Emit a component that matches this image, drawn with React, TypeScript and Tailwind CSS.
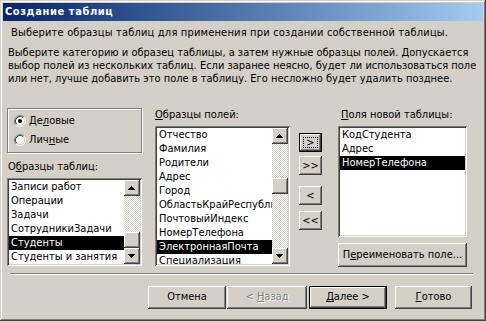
import React from "react";

const F = "font-['DejaVu_Sans_Condensed','DejaVu_Sans',sans-serif]";
const RAISED =
  "shadow-[inset_-1px_-1px_0_#404040,inset_1px_1px_0_#ffffff,inset_-2px_-2px_0_#808080,inset_2px_2px_0_#d4d0c8]";
const SUNKEN =
  "shadow-[inset_1px_1px_0_#808080,inset_-1px_-1px_0_#ffffff,inset_2px_2px_0_#404040,inset_-2px_-2px_0_#d4d0c8]";

function Radio({ checked }: { checked: boolean }) {
  return (
    <svg width="12" height="12" viewBox="0 0 12 12" className="shrink-0">
      <circle cx="6" cy="6" r="4" fill="#ffffff" />
      <path d="M2.11 9.89 A5.5 5.5 0 0 1 9.89 2.11" fill="none" stroke="#808080" />
      <path d="M9.89 2.11 A5.5 5.5 0 0 1 2.11 9.89" fill="none" stroke="#ffffff" />
      <path d="M2.82 9.18 A4.5 4.5 0 0 1 9.18 2.82" fill="none" stroke="#404040" />
      <path d="M9.18 2.82 A4.5 4.5 0 0 1 2.82 9.18" fill="none" stroke="#d4d0c8" />
      {checked && <circle cx="6" cy="6" r="2" fill="#000000" />}
    </svg>
  );
}

function Arrow({ dir }: { dir: "up" | "down" }) {
  return (
    <div className={`w-[16px] h-[16px] bg-[#d4d0c8] ${RAISED} flex items-center justify-center`}>
      <svg width="16" height="16" viewBox="0 0 16 16">
        {dir === "up" ? (
          <g fill="#000">
            <rect x="7" y="6" width="1" height="1" />
            <rect x="6" y="7" width="3" height="1" />
            <rect x="5" y="8" width="5" height="1" />
            <rect x="4" y="9" width="7" height="1" />
          </g>
        ) : (
          <g fill="#000">
            <rect x="4" y="6" width="7" height="1" />
            <rect x="5" y="7" width="5" height="1" />
            <rect x="6" y="8" width="3" height="1" />
            <rect x="7" y="9" width="1" height="1" />
          </g>
        )}
      </svg>
    </div>
  );
}

const CHECK =
  "bg-[image:repeating-conic-gradient(#ffffff_0_25%,#d4d0c8_0_50%)] bg-[length:2px_2px]";

function ScrollBar({ before, after }: { before: number; after: number }) {
  return (
    <div className="w-[16px] h-full flex flex-col shrink-0">
      <Arrow dir="up" />
      <div className={`${CHECK}`} style={{ height: before }} />
      <div className={`w-[16px] h-[16px] bg-[#d4d0c8] ${RAISED}`} />
      <div className={`${CHECK}`} style={{ height: after }} />
      <Arrow dir="down" />
    </div>
  );
}

function ListBox({
  items,
  selected,
  className,
  scroll,
}: {
  items: string[];
  selected: number;
  className: string;
  scroll?: { before: number; after: number };
}) {
  return (
    <div className={`bg-white ${SUNKEN} p-[2px] ${className}`}>
      <div className="flex h-full overflow-hidden">
        <div className="flex-1 min-w-0 overflow-hidden">
          {items.map((t, i) => (
            <div
              key={i}
              className={`h-[14px] leading-[14px] pl-[2px] whitespace-nowrap overflow-hidden ${
                i === selected ? "bg-black text-white" : ""
              }`}
            >
              {t}
            </div>
          ))}
        </div>
        {scroll && <ScrollBar before={scroll.before} after={scroll.after} />}
      </div>
    </div>
  );
}

function SmallBtn({ label, focused }: { label: string; focused?: boolean }) {
  if (focused) {
    return (
      <div className="w-[23px] h-[19px] border border-black">
        <div className={`w-full h-full bg-[#d4d0c8] ${RAISED} p-[3px]`}>
          <div className="w-full h-full border border-dotted border-black flex items-center justify-center leading-none">
            {label}
          </div>
        </div>
      </div>
    );
  }
  return (
    <div className={`w-[23px] h-[19px] bg-[#d4d0c8] ${RAISED} flex items-center justify-center leading-none`}>
      {label}
    </div>
  );
}

function Btn({
  children,
  w,
  def,
  className = "",
}: {
  children: React.ReactNode;
  w: string;
  def?: boolean;
  className?: string;
}) {
  if (def) {
    return (
      <div className={`${w} h-[23px] border border-black ${className}`}>
        <div className={`w-full h-full bg-[#d4d0c8] ${RAISED} flex items-center justify-center`}>
          {children}
        </div>
      </div>
    );
  }
  return (
    <div className={`${w} h-[23px] bg-[#d4d0c8] ${RAISED} flex items-center justify-center ${className}`}>
      {children}
    </div>
  );
}

export default function App() {
  return (
    <div
      className={`w-[486px] h-[321px] bg-[#d4d0c8] p-[3px] ${F} text-[11px] text-black shadow-[inset_-1px_-1px_0_#404040,inset_1px_1px_0_#d4d0c8,inset_-2px_-2px_0_#808080,inset_2px_2px_0_#ffffff] flex flex-col overflow-hidden`}
    >
      <div className="h-[18px] shrink-0 bg-linear-to-r from-[#0a246a] to-[#a6caf0] flex items-center pl-[2px] text-white font-bold text-[11px] tracking-[0.6px] leading-[18px]">
        Создание таблиц
      </div>

      <div className="pl-[8px] pt-[5px] leading-[13px] whitespace-nowrap tracking-[0.18px]">
        Выберите образцы таблиц для применения при создании собственной таблицы.
      </div>
      <div className="pl-[5px] mt-[7px] leading-[13px] whitespace-nowrap">
        Выберите категорию и образец таблицы, а затем нужные образцы полей. Допускается
        <br />
        выбор полей из нескольких таблиц. Если заранее неясно, будет ли использоваться поле
        <br />
        или нет, лучше добавить это поле в таблицу. Его несложно будет удалить позднее.
      </div>

      <div className="flex items-start pl-[4px] mt-[23px]">
        {/* left column */}
        <div className="w-[135px] flex flex-col">
          <div className="h-[45px] border border-[#808080] shadow-[inset_1px_1px_0_#ffffff,1px_1px_0_#ffffff] pl-[6px] pt-[5px] flex flex-col gap-[5px]">
            <div className="h-[14px] flex items-center gap-[3px]">
              <Radio checked />
              <span>
                Де<span className="underline">л</span>овые
              </span>
            </div>
            <div className="h-[14px] flex items-center gap-[3px]">
              <Radio checked={false} />
              <span>
                Лич<span className="underline">н</span>ые
              </span>
            </div>
          </div>
          <div className="mt-[7px] pl-[1px] leading-[13px]">
            О<span className="underline">б</span>разцы таблиц:
          </div>
          <ListBox
            className="mt-[5px] h-[88px]"
            items={["Записи работ", "Операции", "Задачи", "СотрудникиЗадачи", "Студенты", "Студенты и занятия"]}
            selected={4}
            scroll={{ before: 36, after: 0 }}
          />
        </div>

        {/* middle column */}
        <div className="w-[135px] ml-[13px] flex flex-col">
          <div className="leading-[13px]">
            <span className="underline">О</span>бразцы полей:
          </div>
          <ListBox
            className="mt-[5px] h-[140px]"
            items={[
              "Отчество",
              "Фамилия",
              "Родители",
              "Адрес",
              "Город",
              "ОбластьКрайРеспублика",
              "ПочтовыйИндекс",
              "НомерТелефона",
              "ЭлектроннаяПочта",
              "Специализация",
            ]}
            selected={8}
            scroll={{ before: 34, after: 54 }}
          />
        </div>

        {/* move buttons */}
        <div className="ml-[9px] mt-[25px] flex flex-col">
          <SmallBtn label=">" focused />
          <div className="mt-[4px]">
            <SmallBtn label=">>" />
          </div>
          <div className="mt-[11px]">
            <SmallBtn label="<" />
          </div>
          <div className="mt-[6px]">
            <SmallBtn label="<<" />
          </div>
        </div>

        {/* right column */}
        <div className="w-[129px] ml-[16px] flex flex-col">
          <div className="leading-[13px] pl-[3px]">
            <span className="underline">П</span>оля новой таблицы:
          </div>
          <ListBox
            className="mt-[5px] h-[111px]"
            items={["КодСтудента", "Адрес", "НомерТелефона"]}
            selected={2}
          />
          <Btn w="w-[129px]" className="mt-[6px] h-[24px]">
            <span>
              П<span className="underline">е</span>реименовать поле...
            </span>
          </Btn>
        </div>
      </div>

      <div className="ml-[7px] w-[463px] mt-[6px] h-[2px] border-t border-[#808080] border-b border-b-white" />

      <div className="flex pl-[145px] mt-[11px]">
        <Btn w="w-[78px]">Отмена</Btn>
        <Btn w="w-[80px]" className="ml-[1px]">
          <span className="text-[#808080] [text-shadow:1px_1px_0_#ffffff]">
            &lt; <span className="underline">Н</span>азад
          </span>
        </Btn>
        <Btn w="w-[78px]" def className="ml-[2px]">
          <span>
            <span className="underline">Д</span>алее &gt;
          </span>
        </Btn>
        <Btn w="w-[77px]" className="ml-[8px]">
          <span>
            <span className="underline">Г</span>отово
          </span>
        </Btn>
      </div>
    </div>
  );
}
